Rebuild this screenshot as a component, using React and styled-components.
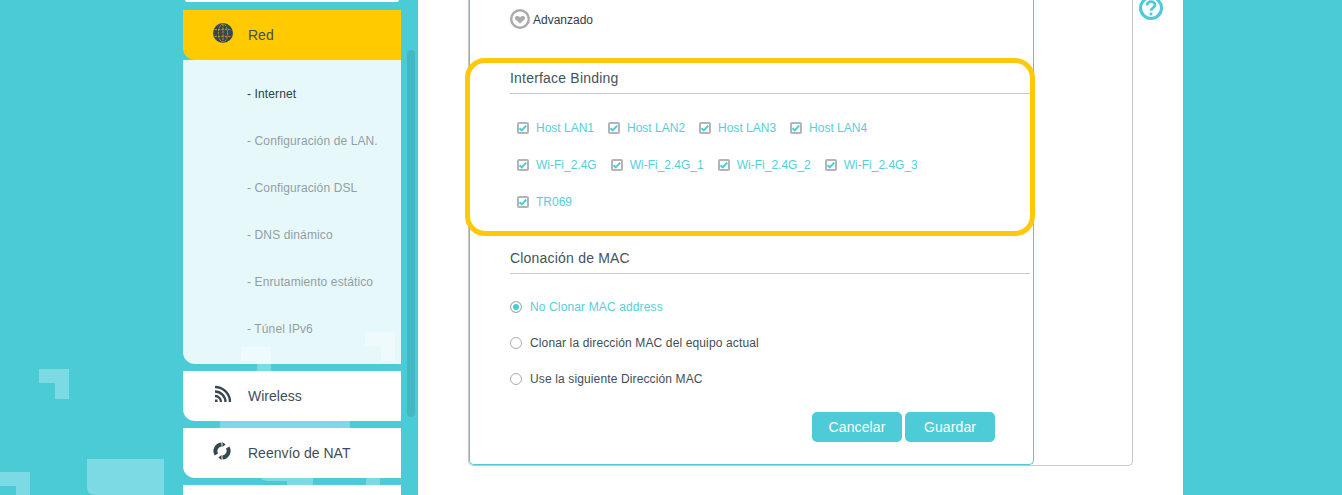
import styled, { createGlobalStyle } from "styled-components";

const submenu = [
  "- Internet",
  "- Configuración de LAN.",
  "- Configuración DSL",
  "- DNS dinámico",
  "- Enrutamiento estático",
  "- Túnel IPv6",
];

const bindingRows = [
  ["Host LAN1", "Host LAN2", "Host LAN3", "Host LAN4"],
  ["Wi-Fi_2.4G", "Wi-Fi_2.4G_1", "Wi-Fi_2.4G_2", "Wi-Fi_2.4G_3"],
  ["TR069"],
];

const macOptions = [
  "No Clonar MAC address",
  "Clonar la dirección MAC del equipo actual",
  "Use la siguiente Dirección MAC",
];

const GlobeIcon = () => (
  <svg width="20" height="20" viewBox="0 0 20 20">
    <circle cx="10" cy="10" r="10" fill="#37474f" />
    <g fill="none" stroke="#b39a1e" strokeWidth="1" strokeDasharray="2.4 1">
      <ellipse cx="10" cy="10" rx="4.6" ry="9" />
      <path d="M10 1v18M1.500 6.600h17M1.500 13.400h17" />
    </g>
  </svg>
);

const WirelessIcon = () => (
  <svg width="20" height="20" viewBox="0 0 20 20">
    <g fill="none" stroke="#37474f" strokeWidth="2.300">
      <path d="M2 3c8.300 0 15 6.700 15 15" />
      <path d="M2 7.500c5.800 0 10.500 4.700 10.500 10.500" />
      <path d="M2 12c3.300 0 6 2.700 6 6" />
    </g>
    <rect x="2" y="15.500" width="2.500" height="2.500" fill="#37474f" />
  </svg>
);

const NatIcon = () => (
  <svg width="18" height="18" viewBox="0 0 20 20">
    <g fill="none" stroke="#37474f" strokeWidth="4.400">
      <path d="M3.700 13.800A7.400 7.400 0 0 1 9.500 2.700" />
      <path d="M16.300 6.200A7.400 7.400 0 0 1 10.500 17.300" />
    </g>
    <path d="M10.500 0l3.600 2.800-3.600 2.800zM9.500 14.400l-3.600 2.800 3.600 2.800z" fill="#37474f" />
  </svg>
);

const AdvancedIcon = () => (
  <svg width="20" height="20" viewBox="0 0 20 20">
    <circle cx="10" cy="10" r="8.800" fill="none" stroke="#ababab" strokeWidth="2.400" />
    <path d="M5 8.300c1-1.700 3.300-1.600 5 0c1.700-1.600 4-1.700 5 0c.5 1-.3 2.100-1 2.800L10 14.500l-4-3.400c-.7-.7-1.500-1.800-1-2.800z" fill="#ababab" />
  </svg>
);

const HelpIcon = () => (
  <svg width="24" height="24" viewBox="0 0 24 24">
    <circle cx="12" cy="12" r="10.500" fill="none" stroke="#4acbd6" strokeWidth="3" />
    <path d="M8 9.500c0-2.400 1.800-3.900 4-3.900s4 1.400 4 3.500c0 2.800-4 2.900-4 5.700" fill="none" stroke="#4acbd6" strokeWidth="2.700" />
    <rect x="10.600" y="16.600" width="2.800" height="2.800" fill="#4acbd6" />
  </svg>
);

const CheckMark = () => (
  <svg width="10" height="10" viewBox="0 0 10 10">
    <path d="M1.500 5.200l2.300 2.200 4.400-4.800" fill="none" stroke="#4acbd6" strokeWidth="2" />
  </svg>
);

const App = () => {
  return (
    <>
      <GlobalStyle />
      <Page>
        <Backdrop viewBox="0 0 418 495" aria-hidden="true">
          <path d="M39 369h30v30h-14v-16h-16zM0 472h30v23h-14v-9H0zM241 347h30v90h-14v-76h-16zM365 332h30v29h-14v-15h-16z" />
          <path d="M87 459h77v36H95c-5 0-8-3-8-8zM220 405h130v30H220zM258 465h55v30h-26v-14h-19c-6 0-10-4-10-10zM366 470h14v25h-14z" />
        </Backdrop>
        <Sidebar>
          <Menu>
            <TopCard />
            <Group>
              <MenuHead $active>
                <MenuIcon><GlobeIcon /></MenuIcon>
                Red
              </MenuHead>
              <SubMenu>
                {submenu.map((item, i) => (
                  <SubItem key={item} $active={i === 0}>{item}</SubItem>
                ))}
              </SubMenu>
            </Group>
            <Group>
              <MenuHead>
                <MenuIcon><WirelessIcon /></MenuIcon>
                Wireless
              </MenuHead>
            </Group>
            <Group>
              <MenuHead>
                <MenuIcon><NatIcon /></MenuIcon>
                Reenvío de NAT
              </MenuHead>
            </Group>
            <Group>
              <MenuHead />
            </Group>
          </Menu>
          <ScrollThumb />
        </Sidebar>
        <Main>
          <OuterPanel>
            <InnerPanel>
              <AdvancedRow>
                <AdvancedIcon />
                <AdvancedLabel>Advanzado</AdvancedLabel>
              </AdvancedRow>
              <BindingTitle>Interface Binding</BindingTitle>
              <BindingList>
                {bindingRows.map((row, i) => (
                  <BindingRow key={i}>
                    {row.map((name) => (
                      <BindingItem key={name}>
                        <CheckBox><CheckMark /></CheckBox>
                        {name}
                      </BindingItem>
                    ))}
                  </BindingRow>
                ))}
              </BindingList>
              <MacTitle>Clonación de MAC</MacTitle>
              <RadioList>
                {macOptions.map((name, i) => (
                  <RadioRow key={name} $selected={i === 0}>
                    <Radio $selected={i === 0} />
                    {name}
                  </RadioRow>
                ))}
              </RadioList>
              <Actions>
                <ActionButton>Cancelar</ActionButton>
                <ActionButton>Guardar</ActionButton>
              </Actions>
              <Highlight />
            </InnerPanel>
          </OuterPanel>
          <HelpButton><HelpIcon /></HelpButton>
        </Main>
      </Page>
    </>
  );
};

const GlobalStyle = createGlobalStyle`
  * {
    box-sizing: border-box;
  }
  body {
    margin: 0;
    background: #4acbd6;
    font-family: "Liberation Sans", Arial, sans-serif;
  }
`;

const Page = styled.div`
  position: relative;
  display: flex;
  height: 495px;
  padding-left: 183px;
  overflow: hidden;
  background: #4acbd6;
`;

const Backdrop = styled.svg`
  position: absolute;
  left: 0;
  top: 0;
  width: 418px;
  height: 495px;
  fill: #7bdae3;
`;

const Sidebar = styled.div`
  position: relative;
  display: flex;
  flex: none;
  width: 235px;
`;

const Menu = styled.div`
  display: flex;
  flex-direction: column;
  width: 218px;
`;

const TopCard = styled.div`
  flex: none;
  height: 2px;
  margin: 0 2px 8px;
  background: #fff;
  border-radius: 0 0 3px 3px;
`;

const Group = styled.div`
  flex: none;
  margin-bottom: 7px;
`;

const MenuHead = styled.div`
  display: flex;
  align-items: center;
  gap: 15px;
  height: 50px;
  padding-left: 30px;
  font-size: 14px;
  color: #3f4e56;
  background: ${(p) => (p.$active ? "#ffcb00" : "#fff")};
  border-radius: 0 0 0 12px;
`;

const MenuIcon = styled.span`
  display: flex;
  align-items: center;
  width: 20px;
  height: 20px;
  margin-top: -4px;
`;

const SubMenu = styled.ul`
  list-style: none;
  margin: 0;
  padding: 11px 0 11px 64px;
  background: rgba(255, 255, 255, 0.87);
  border-radius: 0 0 0 12px;
`;

const SubItem = styled.li`
  height: 47px;
  line-height: 47px;
  font-size: 12px;
  letter-spacing: 0.12px;
  color: ${(p) => (p.$active ? "#2f3d47" : "#939ea3")};
`;

const ScrollThumb = styled.div`
  flex: none;
  width: 8px;
  height: 367px;
  margin: 50px 0 0 6px;
  background: #43b8c3;
  border-radius: 4px;
`;

const Main = styled.main`
  position: relative;
  display: flex;
  align-items: flex-start;
  flex: none;
  width: 765px;
  padding-left: 50px;
  background: #fff;
`;

const OuterPanel = styled.div`
  flex: none;
  width: 665px;
  height: 466px;
  border: solid #c8c8c8;
  border-width: 0 1px 1px;
  border-radius: 0 0 5px 5px;
`;

const InnerPanel = styled.div`
  position: relative;
  width: 565px;
  height: 465px;
  padding: 9px 0 0 40px;
  border: solid #4acbd6;
  border-width: 0 1px 1px;
  border-radius: 0 0 5px 5px;
`;

const AdvancedRow = styled.div`
  display: flex;
  align-items: center;
  gap: 3px;
  height: 20px;
  font-size: 12px;
  color: #2f3d47;
`;

const AdvancedLabel = styled.span`
  margin-top: 1px;
`;

const SectionTitle = styled.h3`
  width: 520px;
  margin: 0;
  padding: 1px 0 5px;
  font-size: 14px;
  font-weight: 400;
  line-height: 20px;
  letter-spacing: 0.2px;
  color: #44535b;
  border-bottom: 1px solid #c8c8c8;
`;

const BindingTitle = styled(SectionTitle)`
  margin-top: 38px;
`;

const MacTitle = styled(SectionTitle)`
  margin-top: 27px;
`;

const BindingList = styled.div`
  padding: 15px 0 0 7px;
`;

const BindingRow = styled.div`
  display: flex;
  gap: 14px;
  height: 37px;
`;

const BindingItem = styled.label`
  display: flex;
  align-items: center;
  gap: 7px;
  font-size: 12px;
  color: #55cfd9;
`;

const CheckBox = styled.span`
  display: flex;
  flex: none;
  align-items: center;
  justify-content: center;
  width: 12px;
  height: 12px;
  border: 2px solid #b4b4b4;
  border-radius: 2px;

  svg {
    flex: none;
  }
`;

const RadioList = styled.div`
  padding-top: 15px;
`;

const RadioRow = styled.label`
  display: flex;
  align-items: center;
  gap: 8px;
  height: 36px;
  font-size: 12px;
  letter-spacing: 0.13px;
  color: ${(p) => (p.$selected ? "#55cfd9" : "#3f4e56")};
`;

const Radio = styled.span`
  width: 12px;
  height: 12px;
  border-radius: 50%;
  border: 1px solid #ababab;
  background: ${(p) => (p.$selected ? "#4acbd6" : "#fff")};
  box-shadow: ${(p) => (p.$selected ? "inset 0 0 0 2px #fff" : "none")};
`;

const Actions = styled.div`
  display: flex;
  justify-content: flex-end;
  gap: 3px;
  width: 485px;
  margin-top: 15px;
`;

const ActionButton = styled.button`
  width: 90px;
  height: 30px;
  padding: 0;
  border: 0;
  border-radius: 5px;
  background: #4dccd8;
  color: #fff;
  font-family: inherit;
  font-size: 14px;
  letter-spacing: 0.1px;
`;

const Highlight = styled.div`
  position: absolute;
  left: -5px;
  top: 58px;
  width: 570px;
  height: 178px;
  border: 5px solid #ffc90a;
  border-radius: 20px;
  pointer-events: none;
`;

const HelpButton = styled.div`
  flex: none;
  width: 24px;
  height: 24px;
  margin: -4px 0 0 6px;
`;

export default App;
